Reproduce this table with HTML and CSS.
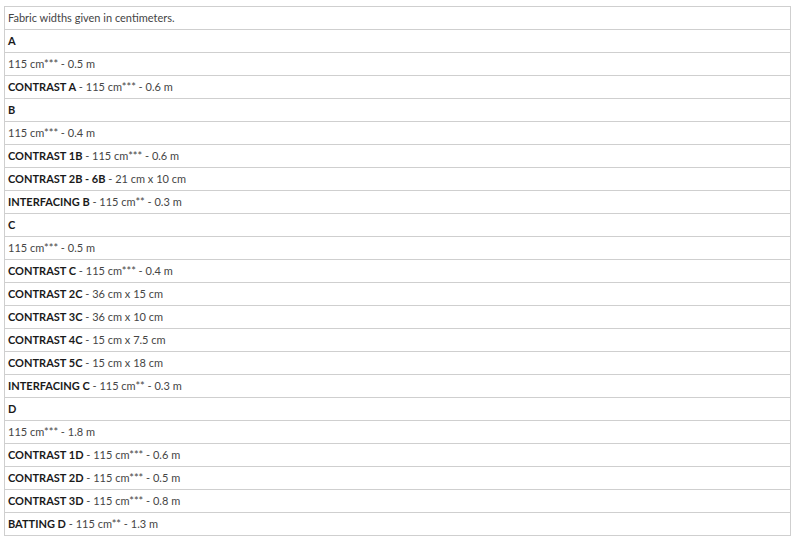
FILE: index.html
```html
<!DOCTYPE html>
<html>
<head>
<meta charset="utf-8">
<link rel="stylesheet" href="styles.css">
</head>
<body>
<table class="fabric">
<tbody>
<tr><td class="note">Fabric widths given in centimeters.</td></tr>
<tr><td><b>A</b></td></tr>
<tr><td>115 cm*** - 0.5 m</td></tr>
<tr><td><b>CONTRAST A</b> - 115 cm*** - 0.6 m</td></tr>
<tr><td><b>B</b></td></tr>
<tr><td>115 cm*** - 0.4 m</td></tr>
<tr><td><b>CONTRAST 1B</b> - 115 cm*** - 0.6 m</td></tr>
<tr><td><b>CONTRAST 2B - 6B</b> - 21 cm x 10 cm</td></tr>
<tr><td><b>INTERFACING B</b> - 115 cm** - 0.3 m</td></tr>
<tr><td><b>C</b></td></tr>
<tr><td>115 cm*** - 0.5 m</td></tr>
<tr><td><b>CONTRAST C</b> - 115 cm*** - 0.4 m</td></tr>
<tr><td><b>CONTRAST 2C</b> - 36 cm x 15 cm</td></tr>
<tr><td><b>CONTRAST 3C</b> - 36 cm x 10 cm</td></tr>
<tr><td><b>CONTRAST 4C</b> - 15 cm x 7.5 cm</td></tr>
<tr><td><b>CONTRAST 5C</b> - 15 cm x 18 cm</td></tr>
<tr><td><b>INTERFACING C</b> - 115 cm** - 0.3 m</td></tr>
<tr><td><b>D</b></td></tr>
<tr><td>115 cm*** - 1.8 m</td></tr>
<tr><td><b>CONTRAST 1D</b> - 115 cm*** - 0.6 m</td></tr>
<tr><td><b>CONTRAST 2D</b> - 115 cm*** - 0.5 m</td></tr>
<tr><td><b>CONTRAST 3D</b> - 115 cm*** - 0.8 m</td></tr>
<tr><td><b>BATTING D</b> - 115 cm** - 1.3 m</td></tr>
</tbody>
</table>
</body>
</html>
```

FILE: styles.css
```css
html, body {
  margin: 0;
  padding: 0;
  background: #fff;
}
body {
  padding: 6px 0 0 4px;
  font-family: Lato, "Open Sans", sans-serif;
}
.fabric {
  border-collapse: collapse;
  width: 787px;
}
.fabric td {
  border: 1px solid #cfcfcf;
  height: 22px;
  padding: 0 0 1px 3px;
  box-sizing: border-box;
  font-size: 11px;
  color: #454545;
  line-height: 21px;
  vertical-align: middle;
}
.fabric td.note {
  font-size: 11px;
}
.fabric b {
  font-weight: 700;
  color: #1a1a1a;
}
```
